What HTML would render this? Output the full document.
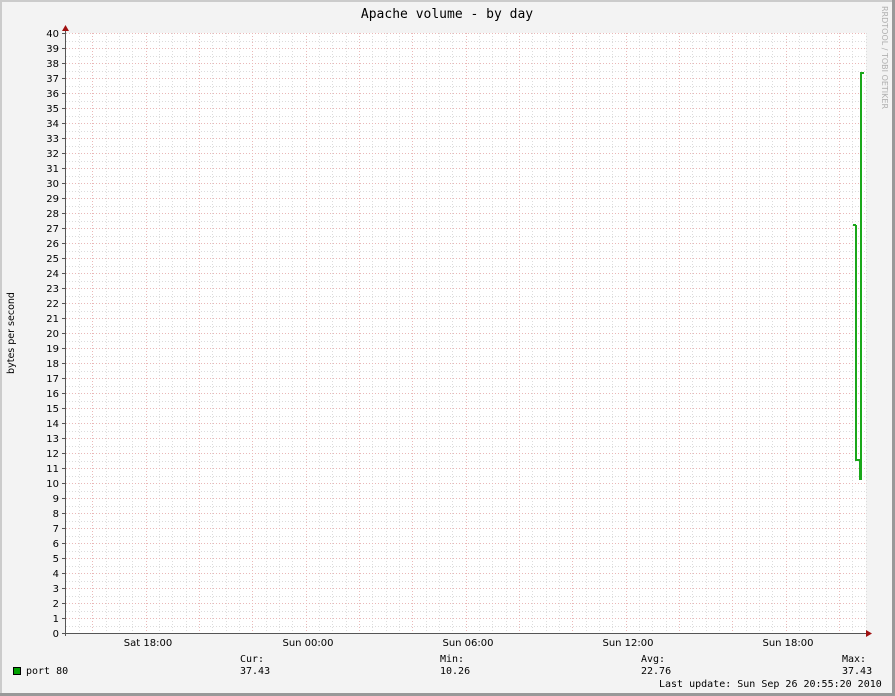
<!DOCTYPE html>
<html><head><meta charset="utf-8"><style>
html,body{margin:0;padding:0;background:#f3f3f3;}
svg{display:block}
</style></head><body>
<svg width="895" height="696" xmlns="http://www.w3.org/2000/svg">
<rect width="895" height="696" fill="#f3f3f3"/>
<rect x="0" y="0" width="895" height="2" fill="#cbcbcb"/>
<rect x="0" y="0" width="2" height="696" fill="#cbcbcb"/>
<rect x="892" y="0" width="3" height="696" fill="#999"/>
<rect x="0" y="693" width="895" height="3" fill="#999"/>
<rect x="65" y="33" width="801" height="600" fill="#fff"/>
<g id="grid" shape-rendering="crispEdges"></g>
<path d="M856 225 H853 M856 225 V460 H860 V480 M861 480 V73 H864" stroke="#1aa71a" stroke-width="2" fill="none"/>
<g shape-rendering="crispEdges">
<line x1="65.5" y1="30" x2="65.5" y2="636" stroke="#555"/>
<line x1="62" y1="633.5" x2="868" y2="633.5" stroke="#555"/>
</g>
<polygon points="62,31 69,31 65.5,25" fill="#a01010"/>
<polygon points="866,630 866,637 872,633.5" fill="#a01010"/>
<text x="447" y="18" font-family="DejaVu Sans Mono, Liberation Mono, monospace" font-size="13" text-anchor="middle">Apache volume - by day</text>
<g id="ylab" font-family="DejaVu Sans, Liberation Sans, sans-serif" font-size="10" fill="#000" text-anchor="end"></g>
<text transform="translate(14,333) rotate(-90)" font-family="DejaVu Sans, Liberation Sans, sans-serif" font-size="9.5" text-anchor="middle">bytes per second</text>
<text transform="translate(882,6) rotate(90)" font-family="DejaVu Sans, Liberation Sans, sans-serif" font-size="8" fill="#b0b0b0">RRDTOOL / TOBI OETIKER</text>
<g font-family="DejaVu Sans, Liberation Sans, sans-serif" font-size="10" text-anchor="middle">
<text x="148" y="646">Sat 18:00</text>
<text x="308" y="646">Sun 00:00</text>
<text x="468" y="646">Sun 06:00</text>
<text x="628" y="646">Sun 12:00</text>
<text x="788" y="646">Sun 18:00</text>
</g>
<rect x="13.5" y="667.5" width="7" height="7" fill="#00a000" stroke="#000"/>
<g font-family="DejaVu Sans Mono, Liberation Mono, monospace" font-size="10">
<text x="26" y="674">port 80</text>
<text x="240" y="662">Cur:</text><text x="240" y="674">37.43</text>
<text x="440" y="662">Min:</text><text x="440" y="674">10.26</text>
<text x="641" y="662">Avg:</text><text x="641" y="674">22.76</text>
<text x="842" y="662">Max:</text><text x="842" y="674">37.43</text>
<text x="659" y="687">Last update: Sun Sep 26 20:55:20 2010</text>
</g>
</svg>
<script>
var ns="http://www.w3.org/2000/svg",g=document.getElementById("grid"),yl=document.getElementById("ylab");
function L(x1,y1,x2,y2,c){var l=document.createElementNS(ns,"line");l.setAttribute("x1",x1);l.setAttribute("y1",y1);l.setAttribute("x2",x2);l.setAttribute("y2",y2);l.setAttribute("stroke",c);l.setAttribute("stroke-dasharray","1,2");g.appendChild(l);}
for(var i=0;i<80;i++){var y=Math.round(633-i*7.5)+0.5;if(i%2==1)L(66,y,866,y,"#dcdcdc");}
for(var x=65.7+13.333;x<866;x+=13.333){L(Math.round(x)+0.5,33,Math.round(x)+0.5,633,"#dcdcdc");}
for(var x=92.3;x<866;x+=53.333){L(Math.round(x)+0.5,33,Math.round(x)+0.5,633,"#eab8b8");}
for(var i=0;i<=40;i++){var y=633-i*15;if(i>0)L(66,y+0.5,866,y+0.5,"#eab8b8");
var t=document.createElementNS(ns,"text");t.setAttribute("x",59);t.setAttribute("y",y+4);t.textContent=i;yl.appendChild(t);
var tk=document.createElementNS(ns,"line");tk.setAttribute("x1",62);tk.setAttribute("x2",65);tk.setAttribute("y1",y+0.5);tk.setAttribute("y2",y+0.5);tk.setAttribute("stroke","#555");g.appendChild(tk);}
</script>
</body></html>
